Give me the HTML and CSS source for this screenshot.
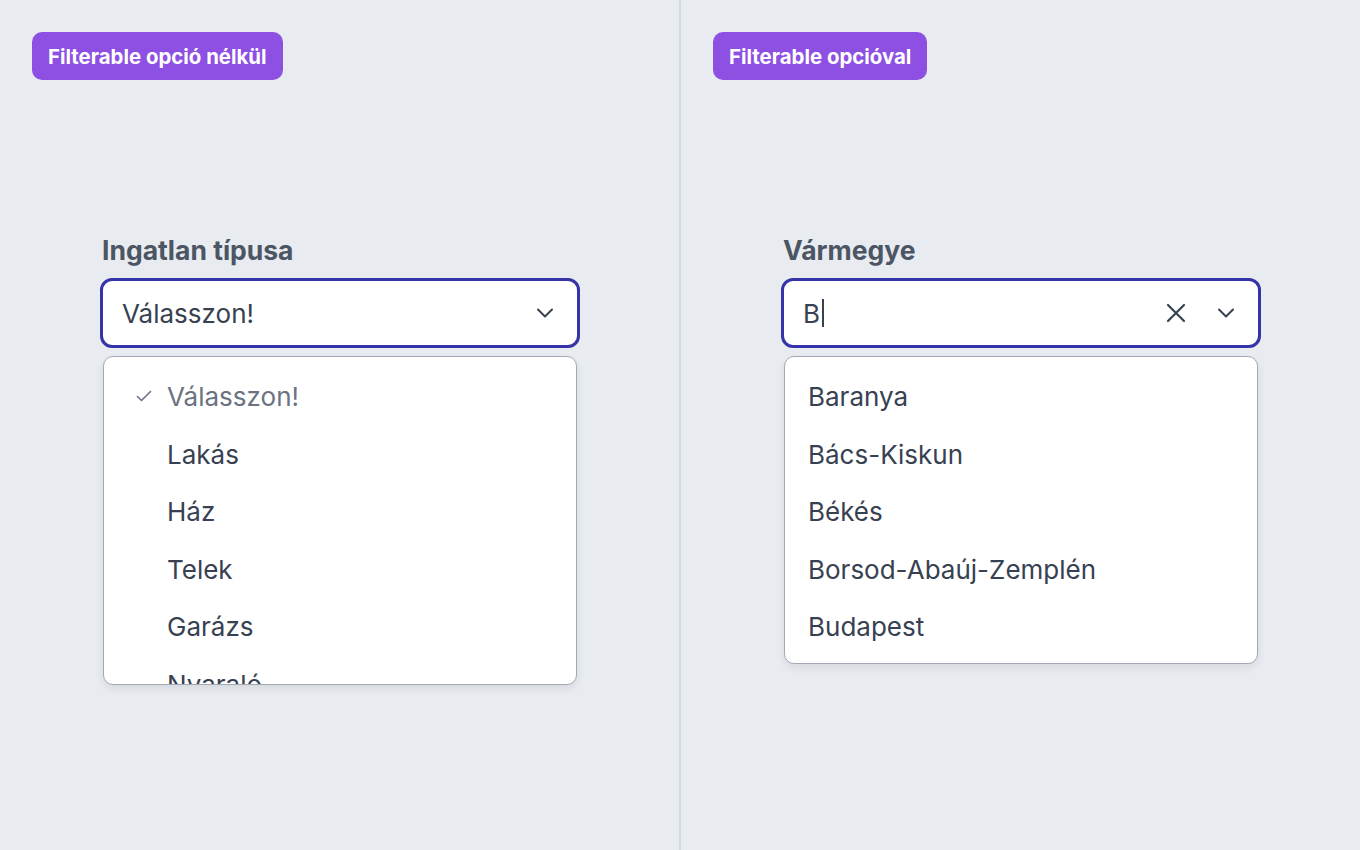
FILE: index.html
```html
<!DOCTYPE html>
<html lang="hu">
<head>
<meta charset="utf-8">
<title>Select demo</title>
<link rel="stylesheet" href="styles.css">
</head>
<body>
<div class="page">
  <section class="panel">
    <span class="badge">Filterable opció nélkül</span>
    <div class="field">
      <div class="label">Ingatlan típusa</div>
      <div class="control">
        <span class="value">Válasszon!</span>
        <span class="icons">
          <svg class="chev" width="24" height="24" viewBox="0 0 24 24"><path d="M5 8.5l7 7 7-7" fill="none" stroke="#374151" stroke-width="2" stroke-linecap="round" stroke-linejoin="round"/></svg>
        </span>
      </div>
      <div class="menu menu-left">
        <div class="item selected">
          <svg class="check" width="18" height="18" viewBox="0 0 18 18"><path d="M2.5 9.5l4 4 9-9" fill="none" stroke="#6b7280" stroke-width="1.6" stroke-linecap="round" stroke-linejoin="round"/></svg>
          <span>Válasszon!</span>
        </div>
        <div class="item"><span>Lakás</span></div>
        <div class="item"><span>Ház</span></div>
        <div class="item"><span>Telek</span></div>
        <div class="item"><span>Garázs</span></div>
        <div class="item"><span>Nyaraló</span></div>
        <div class="item"><span>Iroda</span></div>
      </div>
    </div>
  </section>
  <div class="divider"></div>
  <section class="panel">
    <span class="badge">Filterable opcióval</span>
    <div class="field">
      <div class="label">Vármegye</div>
      <div class="control">
        <span class="value input">B<span class="caret"></span></span>
        <span class="icons">
          <svg class="clear" width="24" height="24" viewBox="0 0 24 24"><path d="M4 4l16 16M20 4L4 20" fill="none" stroke="#374151" stroke-width="2.2" stroke-linecap="round"/></svg>
          <svg class="chev" width="24" height="24" viewBox="0 0 24 24"><path d="M5 8.5l7 7 7-7" fill="none" stroke="#374151" stroke-width="2" stroke-linecap="round" stroke-linejoin="round"/></svg>
        </span>
      </div>
      <div class="menu menu-right">
        <div class="item"><span>Baranya</span></div>
        <div class="item"><span>Bács-Kiskun</span></div>
        <div class="item"><span>Békés</span></div>
        <div class="item"><span>Borsod-Abaúj-Zemplén</span></div>
        <div class="item"><span>Budapest</span></div>
      </div>
    </div>
  </section>
</div>
</body>
</html>
```
FILE: styles.css
```css
* { box-sizing: border-box; }
html, body { margin: 0; padding: 0; }
body {
  background: #e8ebf0;
  font-family: Inter, "Noto Sans", "Liberation Sans", sans-serif;
  color: #374151;
}
.page {
  display: grid;
  grid-template-columns: 679px 2px 679px;
  height: 850px;
}
.divider { background: #d3d7de; }
.panel {
  padding: 32px 0 0 32px;
  display: flex;
  flex-direction: column;
  align-items: flex-start;
}
.badge {
  display: inline-flex;
  align-items: center;
  height: 48px;
  padding: 0 16px;
  background: #8e4fe3;
  color: #fff;
  font-weight: 700;
  font-size: 20.4px;
  border-radius: 10px;
}
.field {
  margin: 155px 0 0 68px;
  width: 480px;
}
.label {
  font-size: 26.5px;
  font-weight: 700;
  color: #4b5563;
  line-height: 30px;
  margin-bottom: 13px;
  padding-left: 2px;
}
.control {
  height: 70px;
  background: #fff;
  border: 3px solid #3533a8;
  border-radius: 12px;
  display: flex;
  align-items: center;
  justify-content: space-between;
  padding: 0 20px 0 19px;
}
.value {
  font-size: 26px;
  color: #374151;
  display: flex;
  align-items: center;
}
.caret {
  display: inline-block;
  width: 2px;
  height: 28px;
  background: #374151;
  margin-left: 2px;
}
.icons {
  display: flex;
  align-items: center;
  gap: 26px;
}
.icons svg { display: block; }
.menu {
  margin: 8px 3px 0;
  background: #fff;
  border: 1px solid #a3a9b4;
  border-radius: 10px;
  box-shadow: 0 4px 8px rgba(17, 24, 39, 0.08);
  padding: 11px 0 7px;
  overflow: hidden;
}
.menu-left { height: 329px; }
.item {
  height: 57.5px;
  display: flex;
  align-items: center;
  font-size: 26px;
  color: #374151;
  padding-left: 23px;
}
.menu-left .item { padding-left: 63px; position: relative; }
.item.selected { color: #6b7280; }
.check {
  position: absolute;
  left: 31px;
  top: 50%;
  margin-top: -10px;
}
```
